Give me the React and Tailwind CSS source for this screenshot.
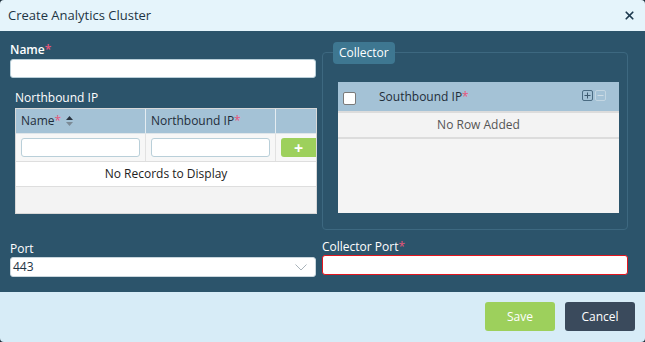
import { X } from "lucide-react";

const Req = () => <span className="text-[#e8547a]">*</span>;

function NorthboundTable() {
  return (
    <div className="ml-[5px] w-[302px] mt-[2px] h-[106px] border border-[#d8d8d8] bg-[#f3f3f3] flex flex-col">
      <div className="flex h-[25px] bg-[#a4c2d6] text-[12px] text-[#1f2d3a] border-b border-[#dfe6ea]">
        <div className="w-[130px] flex items-center pl-[5px] border-r border-[#e4ecf1]">
          Name<Req />
          <svg width="9" height="12" viewBox="0 0 9 12" className="ml-[4px]">
            <path d="M4.5 1 L8 5 L1 5 Z" fill="#2a3440" />
            <path d="M4.5 11 L8 7 L1 7 Z" fill="#7b8a96" />
          </svg>
        </div>
        <div className="w-[130px] flex items-center pl-[5px] border-r border-[#e4ecf1]">
          Northbound IP<Req />
        </div>
        <div className="flex-1" />
      </div>
      <div className="flex h-[28px] bg-[#f7f7f7] border-b border-[#dedede]">
        <div className="w-[130px] flex items-center pl-[5px] border-r border-[#e2e2e2]">
          <div className="w-[119px] h-[19px] bg-white border border-[#b9cfd9] rounded-[3px]" />
        </div>
        <div className="w-[130px] flex items-center pl-[5px] border-r border-[#e2e2e2]">
          <div className="w-[119px] h-[19px] bg-white border border-[#b9cfd9] rounded-[3px]" />
        </div>
        <div className="flex-1 flex items-center pl-[5px]">
          <div className="w-full h-[19px] bg-[#9dd05c] rounded-l-[3px] flex items-center justify-center text-white text-[16px] font-bold leading-none">
            +
          </div>
        </div>
      </div>
      <div className="h-[25px] bg-white border-b border-[#dedede] flex items-center justify-center text-[12px] text-[#222]">
        No Records to Display
      </div>
      <div className="flex-1" />
    </div>
  );
}

function CollectorBox() {
  return (
    <div className="relative mt-[11px] h-[178px] border border-[#3d6880] rounded-[4px] pl-[15px] pr-[8px] pt-[29px]">
      <div className="absolute left-[10px] top-[-11px] h-[22px] px-[6px] bg-[#3e7791] rounded-[4px] text-[12px] text-white flex items-center">
        Collector
      </div>
      <div className="h-[131px] bg-[#f4f4f4] flex flex-col">
        <div className="relative flex items-center h-[31px] bg-[#a4c2d6] border-b-[2px] border-[#dcdcdc] text-[12px] text-[#1f2d3a]">
          <div className="ml-[5px] w-[13px] h-[13px] bg-white border border-[#7a7a7a] rounded-[2px] mt-[4px]" />
          <div className="ml-[23px]">
            Southbound IP<Req />
          </div>
          <div className="absolute right-[13px] top-[8px] flex gap-[2px]">
            <div className="w-[11px] h-[11px] border border-[#4a6b82] rounded-[2px] flex items-center justify-center">
              <svg width="7" height="7" viewBox="0 0 7 7">
                <path d="M3.5 0.5V6.5M0.5 3.5H6.5" stroke="#3d5a70" strokeWidth="1" />
              </svg>
            </div>
            <div className="w-[11px] h-[11px] border border-[#c3d6e2] rounded-[2px] flex items-center justify-center">
              <svg width="7" height="7" viewBox="0 0 7 7">
                <path d="M0.5 3.5H6.5" stroke="#cfdde6" strokeWidth="1" />
              </svg>
            </div>
          </div>
        </div>
        <div className="h-[26px] bg-[#f3f3f3] border-b-[2px] border-[#dcdcdc] flex items-center justify-center text-[12px] text-[#555]">
          No Row Added
        </div>
        <div className="flex-1" />
      </div>
    </div>
  );
}

export default function App() {
  return (
    <div className="w-[645px] h-[342px] bg-[#1b2c38] font-['Open_Sans',sans-serif]">
      <div className="w-full h-full rounded-[4px] overflow-hidden flex flex-col">
        {/* header */}
        <div className="h-[31px] bg-[#e5f4fb] flex items-center justify-between pl-[8px] pr-[9px]">
          <span className="text-[13px] text-[#1e3444]">Create Analytics Cluster</span>
          <X size={13} strokeWidth={3.2} className="text-[#1e3a4e]" />
        </div>

        {/* body */}
        <div className="flex-1 bg-[#2c546b] flex gap-[6px] pl-[10px] pr-[17px] pt-[10px]">
          <div className="w-[306px] flex flex-col">
            <div className="text-[12px] font-semibold text-white leading-[18px]">
              Name<Req />
            </div>
            <div className="h-[19px] bg-white rounded-[3px] border border-[#b9cfd9]" />
            <div className="mt-[11px] pl-[5px] text-[12px] text-white leading-[17px]">Northbound IP</div>
            <NorthboundTable />
            <div className="mt-[26px] text-[12px] text-white leading-[17px]">Port</div>
            <div className="h-[20px] bg-white rounded-[3px] border border-[#c9d6dd] flex items-center justify-between pl-[2px] pr-[8px] text-[12px] text-[#1e3444]">
              443
              <svg width="12" height="7" viewBox="0 0 12 7">
                <path d="M0.5 0.5 L6 6 L11.5 0.5" fill="none" stroke="#a9b3ba" strokeWidth="1" />
              </svg>
            </div>
          </div>
          <div className="flex-1 flex flex-col">
            <CollectorBox />
            <div className="mt-[8px] text-[12px] text-white leading-[17px]">
              Collector Port<Req />
            </div>
            <div className="h-[20px] bg-white rounded-[3px] border-[1.5px] border-[#e4161e]" />
          </div>
        </div>

        {/* footer */}
        <div className="h-[50px] bg-[#d7ecf7] flex items-center justify-end gap-[10px] pr-[10px] pb-[1px]">
          <button className="w-[70px] h-[29px] rounded-[3px] bg-[#9dd05c] text-white text-[12px]">Save</button>
          <button className="w-[70px] h-[29px] rounded-[3px] bg-[#3a4a5c] text-white text-[12px]">Cancel</button>
        </div>
      </div>
    </div>
  );
}
